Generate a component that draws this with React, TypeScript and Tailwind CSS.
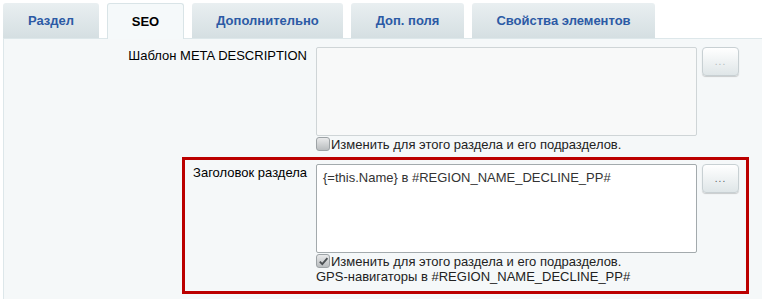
import * as React from "react";

const tabs = [
  { label: "Раздел", w: "w-[96px]" },
  { label: "SEO", w: "w-[77px]", active: true },
  { label: "Дополнительно", w: "w-[151px]" },
  { label: "Доп. поля", w: "w-[113px]" },
  { label: "Свойства элементов", w: "w-[183px]" },
];

function DotsButton({ disabled }: { disabled?: boolean }) {
  return (
    <button
      className={`ml-[5px] w-[37px] h-[29px] shrink-0 rounded-[4px] border border-[#c8d0d3] bg-gradient-to-b from-[#ffffff] to-[#dfe6e8] shadow-[0_1px_1px_rgba(0,0,0,0.18)] text-[10px] leading-none tracking-[1px] ${
        disabled ? "text-[#b3b9bc]" : "text-[#555c5f]"
      }`}
    >
      ...
    </button>
  );
}

function Checkbox({ checked }: { checked?: boolean }) {
  return (
    <span className="mr-[1px] inline-flex w-[14px] h-[14px] shrink-0 items-center justify-center rounded-[3px] border border-[#9da3a6] bg-gradient-to-b from-[#e9eaeb] to-[#b9bdbf]">
      {checked && (
        <svg width="11" height="11" viewBox="0 0 11 11">
          <path d="M1.8 5.6 L4.3 8.2 L9.4 2.2" fill="none" stroke="#4a4f52" strokeWidth="1.8" />
        </svg>
      )}
    </span>
  );
}

export default function App() {
  return (
    <div className="w-[762px] h-[299px] overflow-hidden bg-white pt-[3px] pl-[3px] font-['Liberation_Sans',Arial,sans-serif] text-[13px] leading-[15px] text-[#000]">
      {/* tabs */}
      <div className="flex gap-[8px] h-[35px]">
        {tabs.map((t) => (
          <div
            key={t.label}
            className={`${t.w} flex items-center justify-center font-bold rounded-t-[3px] ${
              t.active
                ? "relative z-10 h-[36px] border border-b-0 border-[#d9e4e7] bg-[#f5f9fa] text-[#000]"
                : "bg-gradient-to-b from-[#e9eff1] to-[#d5dfe2] text-[#2c5aa5]"
            }`}
          >
            {t.label}
          </div>
        ))}
      </div>

      {/* panel */}
      <div className="border-t border-l border-[#dde7ea] bg-[#f5f8f9] pt-[8px] h-[300px]">
        {/* row: meta description */}
        <div className="flex">
          <div className="w-[303px] pt-[1px] text-right">Шаблон META DESCRIPTION</div>
          <div className="ml-[9px]">
            <div className="flex items-start">
              <div className="w-[381px] h-[89px] rounded-[2px] border border-[#cfd5d7] bg-[#f8f9f9]" />
              <DotsButton disabled />
            </div>
            <label className="flex h-[16px] items-center text-[#222]">
              <Checkbox />
              Изменить для этого раздела и его подразделов.
            </label>
          </div>
        </div>

        {/* row: section title, highlighted */}
        <div className="ml-[178px] mt-[5px] w-[567px] border-[3px] border-[#bb0000] pt-[4px] pb-[7px] flex">
          <div className="w-[122px] pt-[1px] text-right">Заголовок раздела</div>
          <div className="ml-[9px]">
            <div className="flex items-start">
              <div className="w-[381px] h-[89px] rounded-[2px] border border-[#a3aaad] bg-white px-[6px] pt-[5px] text-[#333]">
                {"{=this.Name} в #REGION_NAME_DECLINE_PP#"}
              </div>
              <DotsButton />
            </div>
            <label className="flex h-[16px] items-center text-[#222]">
              <Checkbox checked />
              Изменить для этого раздела и его подразделов.
            </label>
            <div className="text-[#222]">GPS-навигаторы в #REGION_NAME_DECLINE_PP#</div>
          </div>
        </div>
      </div>
    </div>
  );
}
